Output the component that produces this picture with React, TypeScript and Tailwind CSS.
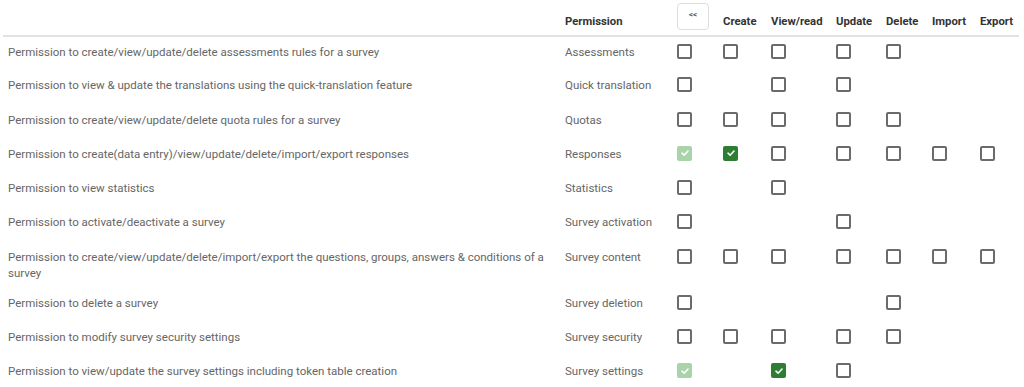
import React from 'react';

type Box = 'off' | 'on' | 'faded' | null;

type Row = {
    description: string;
    name: string;
    boxes: Box[];
};

// order: master, create, view, update, delete, import, export
const rows: Row[] = [
    { description: 'Permission to create/view/update/delete assessments rules for a survey', name: 'Assessments', boxes: ['off', 'off', 'off', 'off', 'off', null, null] },
    { description: 'Permission to view & update the translations using the quick-translation feature', name: 'Quick translation', boxes: ['off', null, 'off', 'off', null, null, null] },
    { description: 'Permission to create/view/update/delete quota rules for a survey', name: 'Quotas', boxes: ['off', 'off', 'off', 'off', 'off', null, null] },
    { description: 'Permission to create(data entry)/view/update/delete/import/export responses', name: 'Responses', boxes: ['faded', 'on', 'off', 'off', 'off', 'off', 'off'] },
    { description: 'Permission to view statistics', name: 'Statistics', boxes: ['off', null, 'off', null, null, null, null] },
    { description: 'Permission to activate/deactivate a survey', name: 'Survey activation', boxes: ['off', null, null, 'off', null, null, null] },
    { description: 'Permission to create/view/update/delete/import/export the questions, groups, answers & conditions of a survey', name: 'Survey content', boxes: ['off', 'off', 'off', 'off', 'off', 'off', 'off'] },
    { description: 'Permission to delete a survey', name: 'Survey deletion', boxes: ['off', null, null, null, 'off', null, null] },
    { description: 'Permission to modify survey security settings', name: 'Survey security', boxes: ['off', 'off', 'off', 'off', 'off', null, null] },
    { description: 'Permission to view/update the survey settings including token table creation', name: 'Survey settings', boxes: ['faded', null, 'on', 'off', null, null, null] },
];

const headers = ['Create', 'View/read', 'Update', 'Delete', 'Import', 'Export'];

function Check({ state }: { state: Box }) {
    if (state === null) return null;
    if (state === 'off') {
        return <span className="block size-[15px] rounded-[2px] border-2 border-[#6b6b6b] bg-white" />;
    }
    return (
        <span className={`flex size-[15px] items-center justify-center rounded-[2px] ${state === 'on' ? 'bg-[#2e7d32]' : 'bg-[#a9d3a9]'}`}>
            <svg width="10" height="10" viewBox="0 0 10 10" fill="none" stroke="white" strokeWidth="1.6" strokeLinecap="round" strokeLinejoin="round">
                <path d="M2 5.2L4.1 7.2L8 3" />
            </svg>
        </span>
    );
}

export default function App() {
    return (
        <div className="bg-white pl-[3px] pr-[5px] pt-[3px] text-[11.5px] leading-[16px] font-['Roboto',sans-serif] text-[#666]">
            <table className="w-[1016px] table-fixed border-collapse">
                <colgroup>
                    <col className="w-[557px]" />
                    <col className="w-[112px]" />
                    <col className="w-[46px]" />
                    <col className="w-[48px]" />
                    <col className="w-[65px]" />
                    <col className="w-[50px]" />
                    <col className="w-[46px]" />
                    <col className="w-[48px]" />
                    <col className="w-[44px]" />
                </colgroup>
                <thead>
                    <tr className="border-b-2 border-[#e2e2e2]">
                        <th className="h-[33px]" />
                        <th className="pb-[5px] pl-[5px] text-left align-bottom text-[11.3px] font-bold text-[#333]">Permission</th>
                        <th className="pl-[5px] align-top text-left">
                            <button className="flex h-[27px] w-[32px] items-center justify-center rounded-[4px] border border-[#ddd] bg-white pb-[4px] text-[8px] text-[#555]">
                                &lt;&lt;
                            </button>
                        </th>
                        {headers.map((h) => (
                            <th key={h} className="pb-[5px] pl-[5px] text-left align-bottom text-[11.3px] font-bold whitespace-nowrap text-[#333]">
                                {h}
                            </th>
                        ))}
                    </tr>
                </thead>
                <tbody>
                    {rows.map((row) => (
                        <tr key={row.name}>
                            <td className="h-[34.3px] pt-[7px] pb-[7px] pl-[5px] align-top">{row.description}</td>
                            <td className="pt-[7px] pl-[5px] align-top whitespace-nowrap">{row.name}</td>
                            {row.boxes.map((b, i) => (
                                <td key={i} className="pt-[7px] pl-[5px] align-top">
                                    <Check state={b} />
                                </td>
                            ))}
                        </tr>
                    ))}
                </tbody>
            </table>
        </div>
    );
}
